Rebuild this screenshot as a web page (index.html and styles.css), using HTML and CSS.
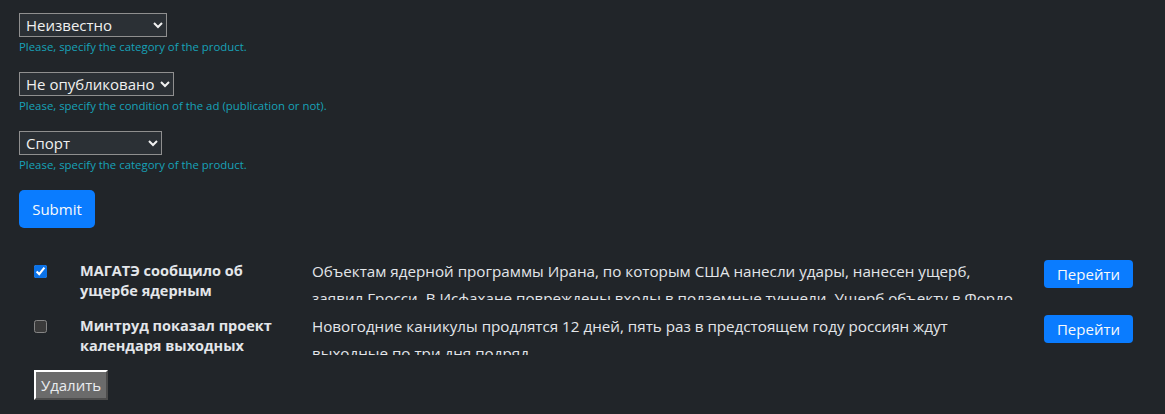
FILE: index.html
```html
<!DOCTYPE html>
<html lang="ru">
<head>
<meta charset="utf-8">
<title>Новости</title>
<link rel="stylesheet" href="styles.css">
</head>
<body>
<main class="page">
  <form class="filters">
    <div class="group">
      <select class="field w1">
        <option>Неизвестно</option>
        <option>Спорт</option>
      </select>
      <small class="help">Please, specify the category of the product.</small>
    </div>
    <div class="group">
      <select class="field w2">
        <option>Не опубликовано</option>
        <option>Опубликовано</option>
      </select>
      <small class="help">Please, specify the condition of the ad (publication or not).</small>
    </div>
    <div class="group">
      <select class="field w3">
        <option>Спорт</option>
        <option>Неизвестно</option>
      </select>
      <small class="help">Please, specify the category of the product.</small>
    </div>
    <button type="button" class="btn-primary submit">Submit</button>
  </form>

  <section class="list">
    <div class="row">
      <div class="cell-check"><input type="checkbox" checked></div>
      <div class="cell-title">МАГАТЭ сообщило об ущербе ядерным</div>
      <div class="cell-desc">Объектам ядерной программы Ирана, по которым США нанесли удары, нанесен ущерб, заявил Гросси. В Исфахане повреждены входы в подземные туннели. Ущерб объекту в Фордо</div>
      <div class="cell-action"><button type="button" class="btn-primary go">Перейти</button></div>
    </div>
    <div class="row">
      <div class="cell-check"><input type="checkbox"></div>
      <div class="cell-title">Минтруд показал проект календаря выходных</div>
      <div class="cell-desc">Новогодние каникулы продлятся 12 дней, пять раз в предстоящем году россиян ждут выходные по три дня подряд</div>
      <div class="cell-action"><button type="button" class="btn-primary go">Перейти</button></div>
    </div>
    <div class="actions">
      <button type="button" class="btn-delete">Удалить</button>
    </div>
  </section>
</main>
</body>
</html>
```
FILE: styles.css
```css
html, body {
  margin: 0;
  padding: 0;
  background: #212529;
  color: #dee2e6;
  color-scheme: dark;
  font-family: "Open Sans", "Noto Sans", sans-serif;
}

.page {
  padding: 13px 19px 0 19px;
}

.filters {
  display: flex;
  flex-direction: column;
  align-items: flex-start;
}

.group {
  display: flex;
  flex-direction: column;
  align-items: flex-start;
  margin-bottom: 17px;
}

.field {
  display: block;
  height: 24px;
  font-family: inherit;
  font-size: 15px;
  color: #f0f0f0;
  background: #2b3035;
  border: 1px solid #8f8f8f;
  border-radius: 0;
  padding: 0 2px;
}
.w1 { width: 148px; }
.w2 { width: 155px; }
.w3 { width: 143px; }

.help {
  display: block;
  font-size: 11.4px;
  line-height: 17px;
  color: #17a2b8;
  margin-top: 1px;
}

.btn-primary {
  background: #0a7cff;
  color: #f8f9fa;
  border: none;
  font-family: inherit;
  cursor: pointer;
}

.submit {
  display: block;
  width: 76px;
  height: 38px;
  border-radius: 5px;
  font-size: 15px;
}

.list {
  margin-top: 30px;
  padding-left: 15px;
}

.row {
  display: flex;
  align-items: flex-start;
  height: 55px;
}

.cell-check {
  width: 46px;
  padding-top: 7px;
}
.cell-check input {
  display: block;
  margin: 0;
  width: 13px;
  height: 13px;
  accent-color: #0b72e7;
}

.cell-title {
  width: 208px;
  margin-right: 24px;
  font-weight: 700;
  font-size: 14.5px;
  line-height: 20px;
  padding-top: 3px;
  color: #e3e6ea;
}

.cell-desc {
  width: 702px;
  font-size: 15.2px;
  line-height: 27px;
  height: 42px;
  overflow: hidden;
  color: #e3e6ea;
}

.cell-action {
  margin-left: 30px;
  padding-top: 2px;
}

.go {
  display: block;
  width: 89px;
  height: 28px;
  border-radius: 4px;
  font-size: 15px;
}

.actions {
  padding-top: 2px;
}

.btn-delete {
  display: block;
  background: #6b6b6b;
  color: #e9ecef;
  font-family: inherit;
  font-size: 15px;
  height: 30px;
  width: 74px;
  border: 2px outset #ffffff;
  border-right-color: #a0a0a0;
  border-bottom-color: #a0a0a0;
  padding: 0;
}
```
